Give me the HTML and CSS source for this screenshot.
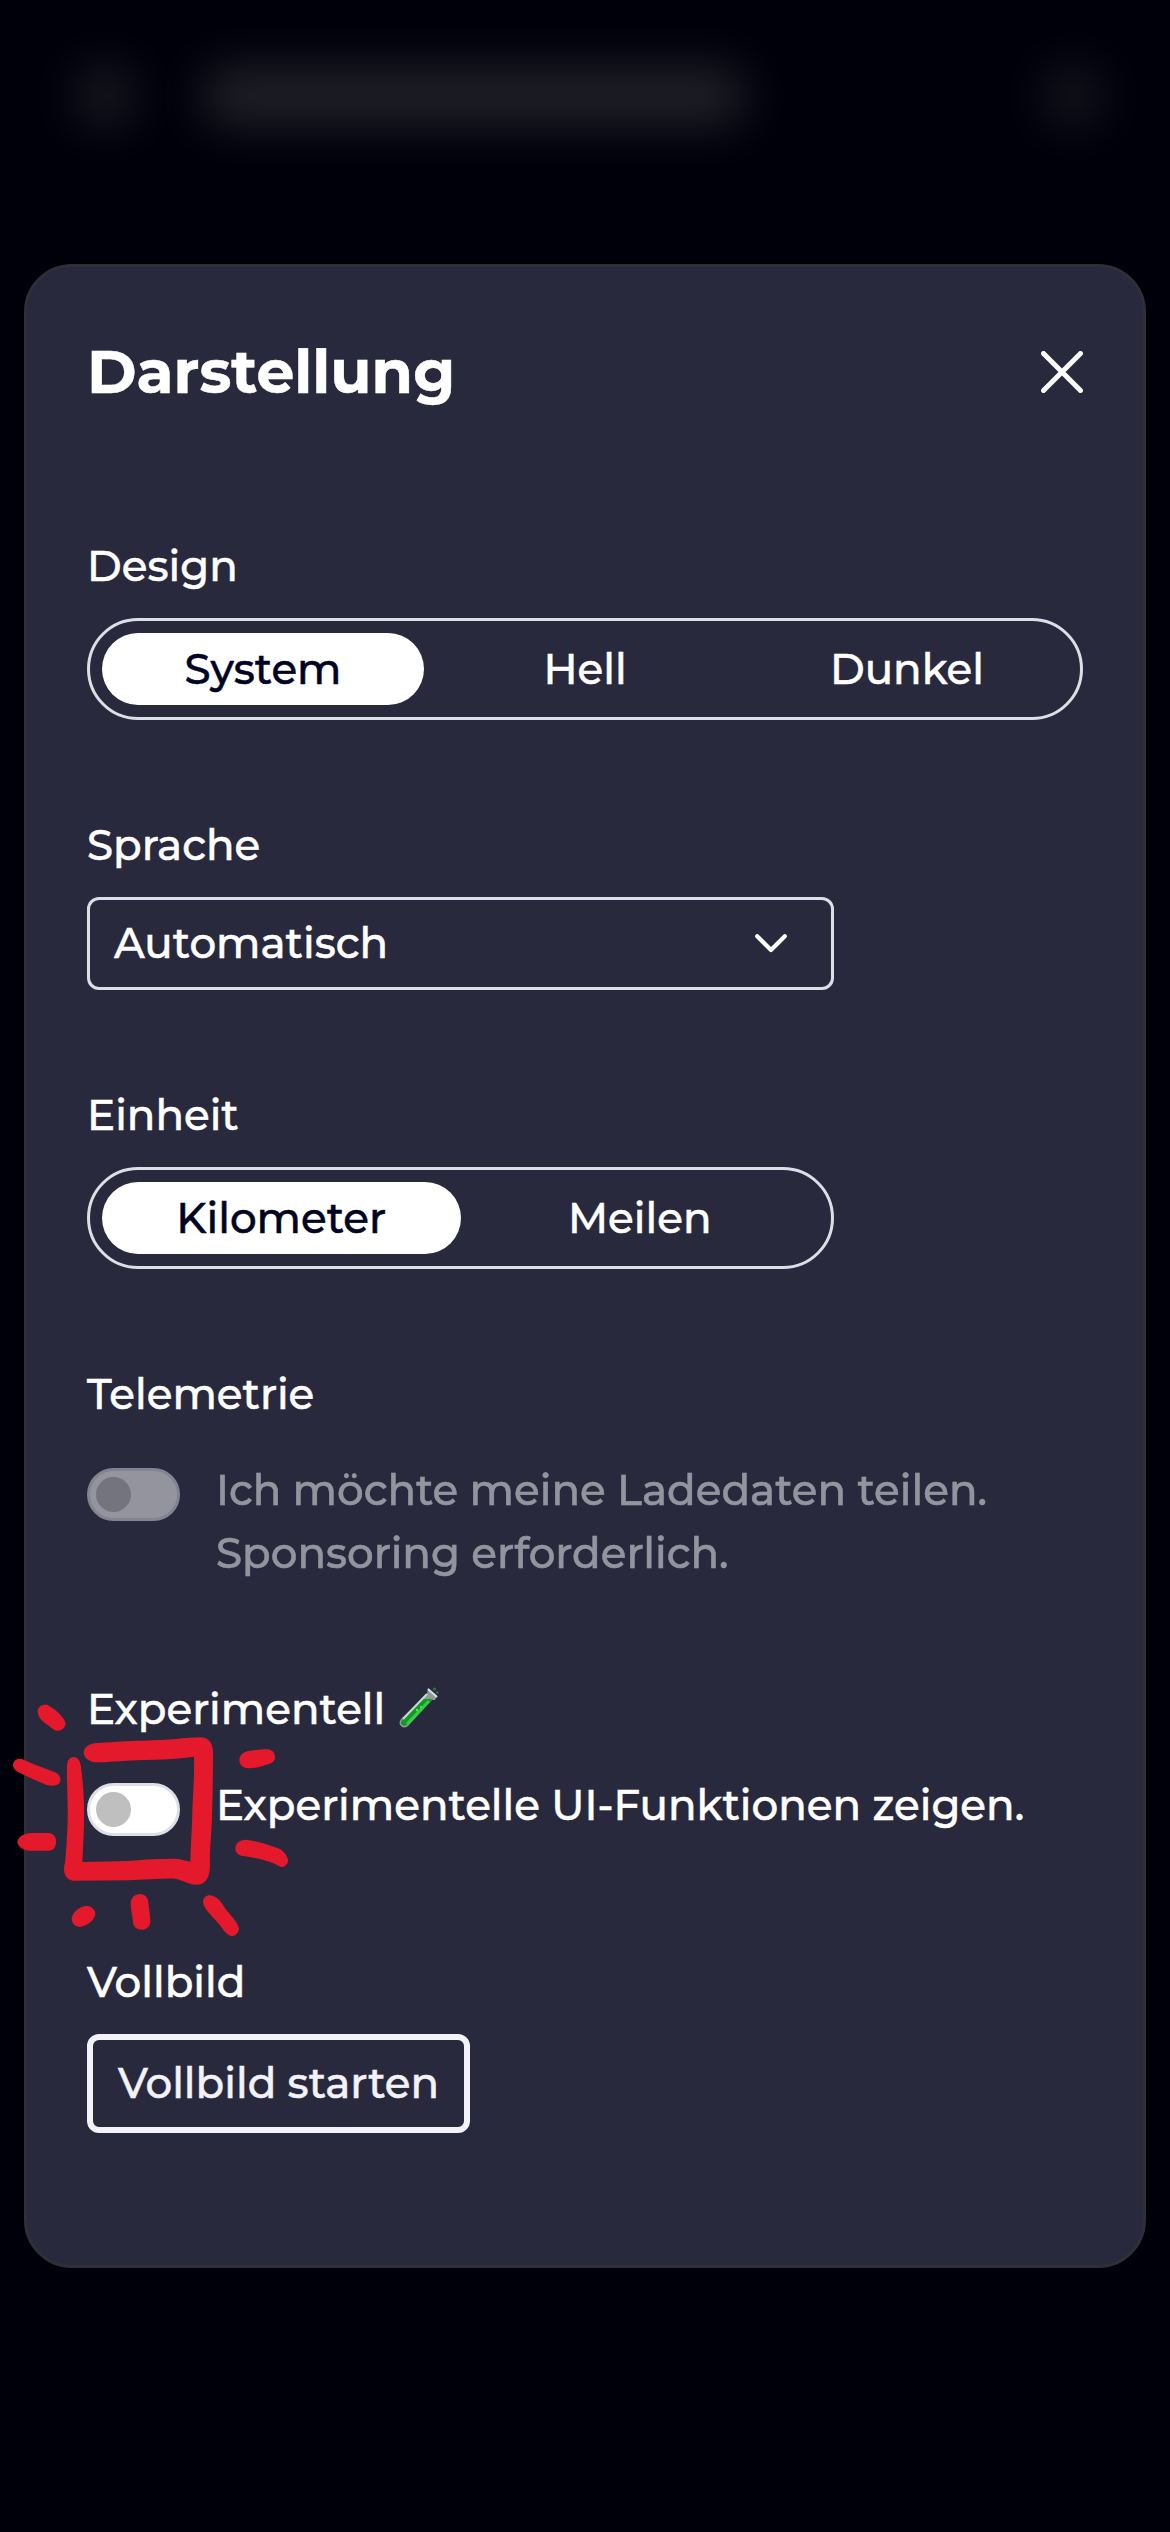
FILE: index.html
```html
<!DOCTYPE html>
<html lang="de">
<head>
<meta charset="utf-8">
<title>Darstellung</title>
<link rel="stylesheet" href="styles.css">
</head>
<body>
<header class="backdrop" aria-hidden="true">
  <span class="blob blob-menu"></span>
  <span class="blob blob-title"></span>
  <span class="blob blob-action"></span>
</header>
<main class="modal">
  <div class="modal-header">
    <h1 class="title">Darstellung</h1>
    <svg class="close" viewBox="0 0 42 42"><path d="M2.5 2.5 39.5 39.5M39.5 2.5 2.5 39.5"/></svg>
  </div>
  <section class="group">
    <div class="label">Design</div>
    <div class="segments">
      <span class="segment active">System</span>
      <span class="segment">Hell</span>
      <span class="segment">Dunkel</span>
    </div>
  </section>
  <section class="group">
    <div class="label">Sprache</div>
    <div class="select narrow">
      <span>Automatisch</span>
      <svg class="chevron" viewBox="0 0 32 19"><path d="M2.2 2.2 16 16 29.8 2.2"/></svg>
    </div>
  </section>
  <section class="group">
    <div class="label">Einheit</div>
    <div class="segments narrow">
      <span class="segment active">Kilometer</span>
      <span class="segment">Meilen</span>
    </div>
  </section>
  <section class="group check-group">
    <div class="label">Telemetrie</div>
    <div class="check disabled">
      <span class="toggle"></span>
      <div class="check-text">Ich möchte meine Ladedaten teilen.<br>Sponsoring erforderlich.</div>
    </div>
  </section>
  <section class="group check-group experimental">
    <div class="label with-icon"><span>Experimentell</span>
      <svg class="tube" viewBox="0 0 40 42">
        <path class="glass" d="M29 1 38 9 36 13 33 13 9 39Q5 42 2 39Q-1 36 2 32L28 7Z"/>
        <path class="liquid" d="M24 12 34 12 9 37Q6 40 3 38Q1 36 3 33Z"/>
        <path class="glow" d="M30 14 8 37"/>
        <path class="shine" d="M4 32 28 7"/>
        <path class="rim" d="M29 2 38 10"/>
        <circle class="bubble" cx="18" cy="23" r="1.2"/>
        <circle class="bubble" cx="22" cy="20" r="1"/>
        <circle class="drop" cx="35.5" cy="2" r="1.5"/>
        <circle class="drop" cx="38.3" cy="5.5" r="1.2"/>
      </svg>
    </div>
    <div class="check">
      <span class="toggle"></span>
      <div class="check-text">Experimentelle UI-Funktionen zeigen.</div>
    </div>
  </section>
  <section class="group">
    <div class="label">Vollbild</div>
    <button class="button">Vollbild starten</button>
  </section>
</main>
<svg class="marks" viewBox="0 0 960 900">
  <path d="M251 278C252 260 270 249 293 249C350 245 380 242 430 242C500 241 560 233 604 232C627 233 639 252 639 277C639 370 637 440 636 470C634 530 628 575 630 615C629 654 618 672 591 674C570 674 555 664 527 656C480 655 430 659 383 661L220 662C202 660 192 646 192 628C193 614 195 608 196 600C200 550 204 500 203 450C203 400 200 350 201 316C202 300 210 291 221 291C235 292 240 303 243 320C247 355 252 400 252 440C253 500 250 550 247 606L383 603C440 598 490 596 525 596C545 597 560 603 571 605C572 550 577 500 577 450C580 390 583 350 582 290C530 297 480 299 430 300C380 301 340 306 293 307C268 307 252 294 251 278Z"/>
  <path d="M113 156C113 138 128 132 143 135C165 147 190 168 197 190C195 207 180 216 164 211C145 195 114 180 113 156Z"/>
  <path d="M39 314C40 300 53 293 66 297C100 314 140 326 165 337C183 345 184 361 178 370C170 379 155 378 140 375C110 363 80 349 55 337C43 330 38 322 39 314Z"/>
  <path d="M52 546C54 530 75 519 92 519L147 519C162 521 168 532 168 546C168 562 160 571 147 572L90 572C70 571 54 560 52 546Z"/>
  <path d="M718 300C719 283 732 274 750 272C770 269 790 268 803 268C819 270 826 280 825 294C823 307 812 312 796 315C780 321 760 325 745 325C728 323 718 314 718 300Z"/>
  <path d="M706 566C706 549 719 540 737 539C775 544 812 556 842 568C857 581 865 594 864 605C860 617 850 623 841 620C808 602 770 594 728 588C713 584 706 577 706 566Z"/>
  <path d="M215 775C218 756 238 739 261 737C276 739 286 750 286 763C283 781 262 798 240 801C226 801 215 790 215 775Z"/>
  <path d="M392 730C393 713 404 702 420 702C436 703 444 713 445 727C446 745 451 766 451 786C449 800 440 809 426 809C410 809 401 800 399 788C398 766 392 750 392 730Z"/>
  <path d="M609 727C609 713 618 706 630 706C655 709 665 730 677 747C692 768 713 785 717 806C715 820 705 829 694 828C677 824 670 807 659 795C643 774 612 750 609 727Z"/>
</svg>
</body>
</html>
```
FILE: styles.css
```css
* { box-sizing: border-box; }
body {
  margin: 0;
  width: 1170px;
  height: 2532px;
  overflow: hidden;
  position: relative;
  background: #00000b;
  color: #fff;
  font: 500 42px/63px Montserrat, Inter, sans-serif;
  -webkit-text-stroke: .5px currentColor;
}

/* blurred page header behind the dialog */
.backdrop { height: 264px; display: flex; padding: 68px 70px 0 78px; }
.blob { display: block; height: 56px; background: #fffff0; border-radius: 16px; filter: blur(24px); }
.blob-menu { width: 54px; opacity: .11; }
.blob-title { width: 540px; margin-left: 72px; opacity: .135; }
.blob-action { width: 54px; margin-left: auto; opacity: .09; }

.modal {
  width: 1122px;
  height: 2004px;
  margin: 0 24px;
  padding: 75px 60px 0;
  border: 3px solid #2f2f38;
  border-radius: 48px;
  background: #28293d;
}
.modal-header { display: flex; justify-content: space-between; align-items: center; height: 60px; margin-bottom: 133px; }
.title { margin: 0; font-size: 60px; line-height: 60px; font-weight: 700; }
.close { width: 42px; height: 42px; }
.close path, .chevron path { fill: none; stroke: #fff; stroke-width: 5; stroke-linecap: round; stroke-linejoin: round; }
.chevron path { stroke-width: 4.2; }

.group { margin-bottom: 94px; }
.label { height: 63px; margin-bottom: 20px; white-space: nowrap; }
.segments { display: flex; height: 102px; padding: 12px; border: 3px solid #dddfe6; border-radius: 51px; }
.segment { flex: 1 1 0; height: 72px; line-height: 72px; text-align: center; border-radius: 36px; }
.active { background: #fff; color: #000322; }
.select {
  display: flex;
  align-items: center;
  justify-content: space-between;
  height: 93px;
  padding: 0 44px 0 24px;
  border: 3px solid #dddfe6;
  border-radius: 12px;
}
.narrow { width: 747px; }
.chevron { width: 32px; height: 19px; }

.check-group { margin-bottom: 93px; }
.check-group .label { margin-bottom: 33px; }
.experimental { margin-bottom: 114px; }
.check { display: flex; gap: 36px; white-space: nowrap; }
.toggle { flex: none; width: 93px; height: 53px; margin-top: 9px; padding: 6px; border: 3px solid #dddfe6; border-radius: 27px; background: #fff; }
.toggle::before { content: ""; display: block; width: 35px; height: 35px; border-radius: 50%; background: #bfbfbf; }
.disabled { opacity: .5; }
.with-icon { display: flex; align-items: center; gap: 14px; }
.tube { width: 40px; height: 42px; margin-top: -3px; }
.glass { fill: #8c9a98; }
.liquid { fill: #15952a; }
.glow { stroke: #2bd335; stroke-width: 3; }
.shine { stroke: #c4dccb; stroke-width: 2; }
.rim { stroke: #dcdce0; stroke-width: 2; }
.bubble { fill: #54e85a; }
.drop { fill: #22803a; }

.button {
  display: block;
  width: 383px;
  height: 99px;
  padding: 0;
  border: 6px solid #f2f2f8;
  border-radius: 12px;
  background: none;
  color: #f2f2f8;
  font: inherit;
  white-space: nowrap;
}

/* hand-drawn highlight over the switch */
.marks { position: absolute; left: 0; top: 1660px; width: 320px; height: 300px; fill: #e41a2c; }
```
